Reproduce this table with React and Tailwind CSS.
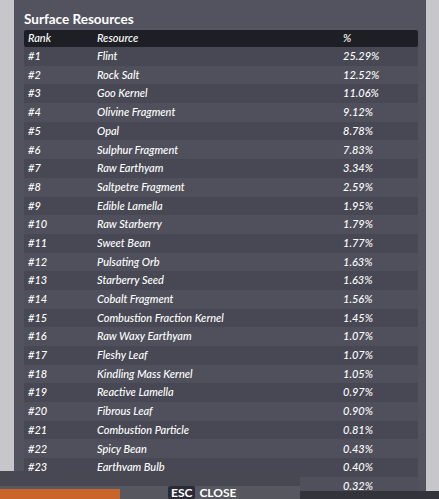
import React from 'react';

const resources = [
  ['Flint', '25.29%'],
  ['Rock Salt', '12.52%'],
  ['Goo Kernel', '11.06%'],
  ['Olivine Fragment', '9.12%'],
  ['Opal', '8.78%'],
  ['Sulphur Fragment', '7.83%'],
  ['Raw Earthyam', '3.34%'],
  ['Saltpetre Fragment', '2.59%'],
  ['Edible Lamella', '1.95%'],
  ['Raw Starberry', '1.79%'],
  ['Sweet Bean', '1.77%'],
  ['Pulsating Orb', '1.63%'],
  ['Starberry Seed', '1.63%'],
  ['Cobalt Fragment', '1.56%'],
  ['Combustion Fraction Kernel', '1.45%'],
  ['Raw Waxy Earthyam', '1.07%'],
  ['Fleshy Leaf', '1.07%'],
  ['Kindling Mass Kernel', '1.05%'],
  ['Reactive Lamella', '0.97%'],
  ['Fibrous Leaf', '0.90%'],
  ['Combustion Particle', '0.81%'],
  ['Spicy Bean', '0.43%'],
  ['Earthyam Bulb', '0.40%'],
  ['', '0.32%'],
];

const App = () => {
  return (
    <div
      className="relative w-[439px] h-[499px] overflow-hidden bg-[#c7c7cb] flex"
      style={{ fontFamily: 'Lato, "Open Sans", sans-serif' }}
    >
      <div className="w-[14px] shrink-0" />

      {/* Panel */}
      <div className="w-[412px] shrink-0 bg-[#52535f] pl-[10px] pr-[8px] pt-[9px] pb-[8px]">
        <h2 className="text-[13.5px] font-bold text-white leading-[20px] mb-[1px]">
          Surface Resources
        </h2>

        <div className="text-white italic text-[11px] font-medium">
          <div className="grid grid-cols-[73px_246px_1fr] items-center h-[17px] bg-[#1e1f25] rounded-[2px]">
            <span className="pl-[4px]">Rank</span>
            <span>Resource</span>
            <span>%</span>
          </div>

          {resources.map(([name, pct], i) => (
            <div
              key={i}
              className={`grid grid-cols-[73px_246px_1fr] items-center h-[18.7px] ${i % 2 === 0 ? 'bg-[#474853]' : 'bg-[#4f505b]'}`}
            >
              <span className="pl-[4px]">{name ? `#${i + 1}` : ''}</span>
              <span className="whitespace-nowrap">{name}</span>
              <span>{pct}</span>
            </div>
          ))}
        </div>
      </div>

      <div className="flex-1" />

      {/* Bottom bar lying over the table */}
      <div className="absolute left-0 bottom-0 w-[300px] h-[28px] flex flex-col">
        <div className="h-[15px] bg-[#474852]" />
        <div className="flex-1 flex items-end bg-[#56575f]">
          <div className="w-[120px] h-[10px] bg-[#c9652b]" />
          <div className="ml-[48px] flex items-center gap-[4px] mb-[0px]">
            <span className="bg-[#2a2a38] text-white text-[12px] font-bold px-[3px] leading-[13px] rounded-[2px]">
              ESC
            </span>
            <span className="text-white text-[12px] font-bold leading-[13px]">CLOSE</span>
          </div>
        </div>
      </div>
      <div className="absolute right-0 bottom-0 w-[139px] h-[8px] bg-[#33343b]" />
    </div>
  );
};

export default App;
